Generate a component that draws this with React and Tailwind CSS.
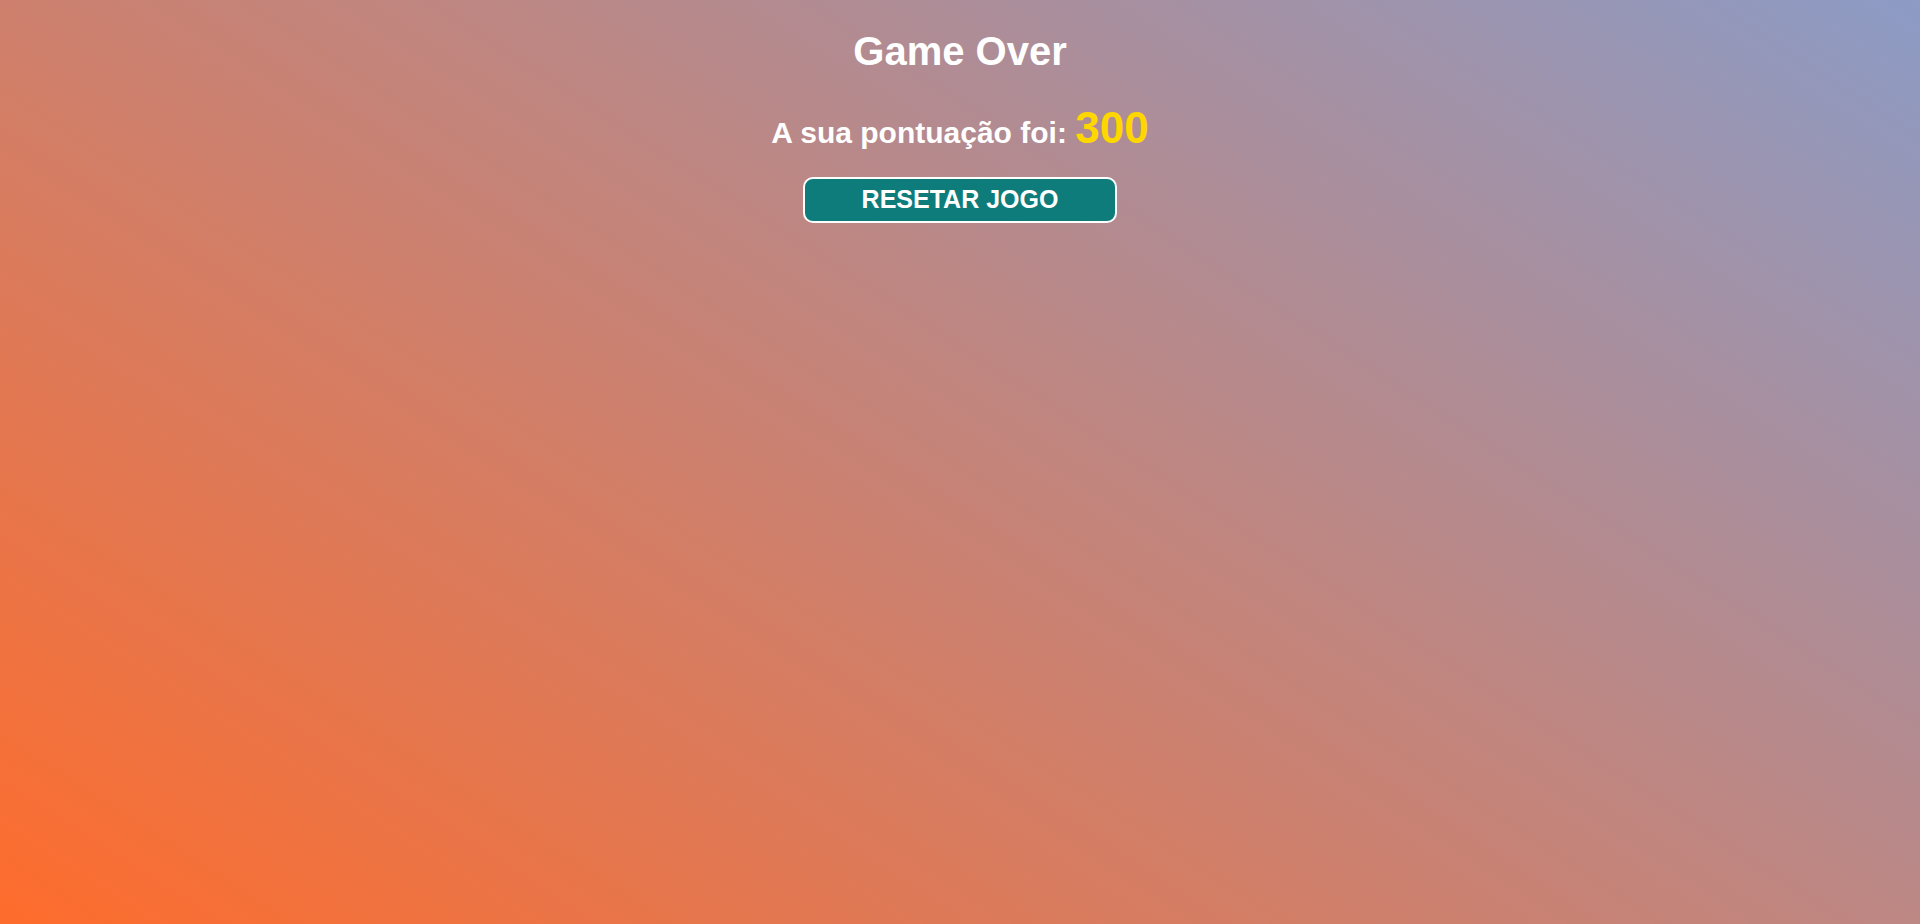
function App() {
  const score = 300;

  return (
    <div className="min-h-screen w-full bg-[linear-gradient(33deg,#fe6c2c,#8c9bc5)] font-['Liberation_Sans',Arial,sans-serif] text-white">
      <div className="flex flex-col items-center pt-[31px]">
        <h1 className="text-[40px] font-bold leading-none">Game Over</h1>
        <p className="mt-[35px] text-[30px] font-bold leading-none">
          A sua pontuação foi: <span className="text-[44px] text-[#ffd700]">{score}</span>
        </p>
        <button
          type="button"
          className="mt-[27px] h-[46px] w-[314px] rounded-[10px] border-2 border-white bg-[#0e7c7b] text-[25px] font-bold text-white"
        >
          RESETAR JOGO
        </button>
      </div>
    </div>
  );
}

export default App;
